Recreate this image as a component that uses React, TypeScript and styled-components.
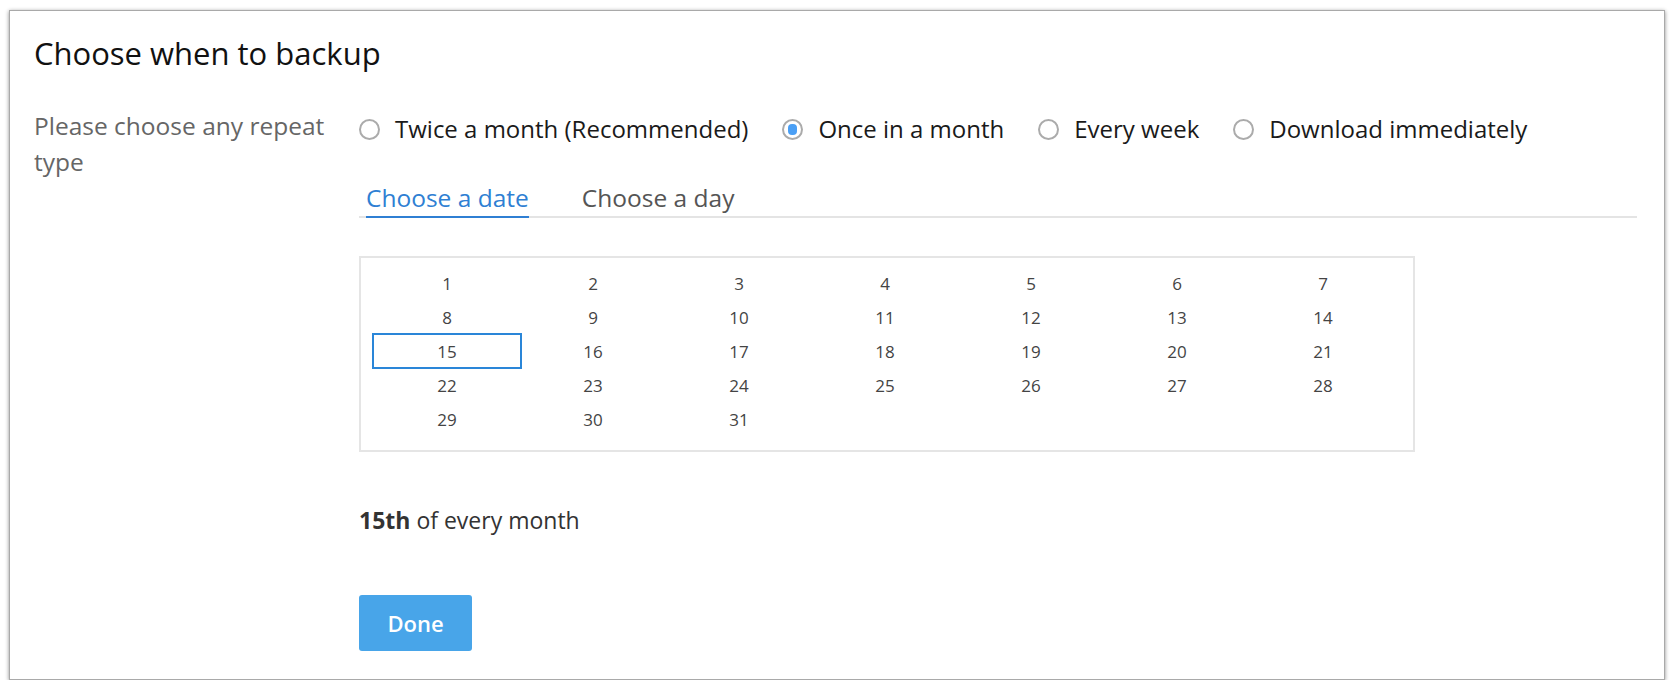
import React, { useState } from "react";
import styled, { createGlobalStyle } from "styled-components";

const GlobalStyle = createGlobalStyle`
  html, body {
    margin: 0;
    padding: 0;
    background: #ffffff;
  }
  body {
    font-family: "Open Sans", Lato, Arial, sans-serif;
  }
`;

const Card = styled.div`
  box-sizing: border-box;
  margin: 10px 0 0 9px;
  width: 1656px;
  height: 670px;
  background: #fff;
  border: 1px solid #a9a9a9;
  box-shadow: 0 1px 4px rgba(0, 0, 0, 0.45);
  padding: 22px 27px 0 24px;
`;

const Title = styled.h1`
  margin: 0;
  font-size: 31px;
  font-weight: 400;
  color: #111;
  line-height: 40px;
`;

const Body = styled.div`
  display: grid;
  grid-template-columns: 325px 1fr;
  margin-top: 46px;
`;

const Label = styled.div`
  font-size: 24.5px;
  line-height: 36px;
  color: #666;
  margin-top: -11px;
  padding-right: 16px;
`;

const Content = styled.div`
  display: flex;
  flex-direction: column;
`;

const RadioRow = styled.div`
  display: flex;
  align-items: center;
  gap: 34px;
  height: 20px;
`;

const RadioOption = styled.label`
  display: flex;
  align-items: center;
  gap: 15px;
  font-size: 24px;
  line-height: 30px;
  color: #1a1a1a;
  cursor: pointer;
`;

const Circle = styled.span<{ $on: boolean }>`
  box-sizing: border-box;
  width: 21px;
  height: 21px;
  border-radius: 50%;
  border: 2px solid #ababab;
  display: inline-flex;
  align-items: center;
  justify-content: center;
  background: #fff;
  &::after {
    content: "";
    display: ${(p) => (p.$on ? "block" : "none")};
    width: 9px;
    height: 11px;
    border-radius: 4px;
    background: #4a9ff5;
  }
`;

const TabBar = styled.div`
  display: flex;
  gap: 53px;
  margin-top: 44px;
  padding-left: 7px;
  border-bottom: 2px solid #e4e4e4;
`;

const Tab = styled.button<{ $active: boolean }>`
  background: none;
  border: none;
  padding: 0 0 3px;
  margin-bottom: -2px;
  font-family: inherit;
  font-size: 24.5px;
  line-height: 30px;
  color: ${(p) => (p.$active ? "#2f7fd3" : "#555")};
  border-bottom: 2px solid ${(p) => (p.$active ? "#2f7fd3" : "transparent")};
  cursor: pointer;
`;

const DateBox = styled.div`
  box-sizing: border-box;
  width: 1056px;
  margin-top: 38px;
  border: 2px solid #e5e5e5;
  padding: 8px 16px 14px 13px;
  display: grid;
  grid-template-columns: repeat(7, 146px);
  grid-auto-rows: 34px;
`;

const DateCell = styled.div<{ $selected: boolean }>`
  box-sizing: border-box;
  display: flex;
  align-items: center;
  justify-content: center;
  font-size: 17px;
  color: #444;
  cursor: pointer;
  border: 2px solid ${(p) => (p.$selected ? "#2a86d8" : "transparent")};
  margin: ${(p) => (p.$selected ? "-1px -2px" : "0")};
`;

const Summary = styled.div`
  margin-top: 54px;
  font-size: 23px;
  line-height: 29px;
  color: #333;
  b {
    font-weight: 700;
  }
`;

const DoneButton = styled.button`
  margin-top: 60px;
  width: 113px;
  height: 56px;
  border: none;
  border-radius: 3px;
  background: #48a5e9;
  color: #fff;
  font-family: inherit;
  font-size: 22px;
  font-weight: 600;
  cursor: pointer;
`;

const options = [
  "Twice a month (Recommended)",
  "Once in a month",
  "Every week",
  "Download immediately",
];

const ordinal = (n: number) => {
  if (n % 10 === 1 && n !== 11) return `${n}st`;
  if (n % 10 === 2 && n !== 12) return `${n}nd`;
  if (n % 10 === 3 && n !== 13) return `${n}rd`;
  return `${n}th`;
};

export default function App() {
  const [repeat, setRepeat] = useState(1);
  const [tab, setTab] = useState(0);
  const [day, setDay] = useState(15);

  return (
    <>
      <GlobalStyle />
      <Card>
        <Title>Choose when to backup</Title>
        <Body>
          <Label>Please choose any repeat type</Label>
          <Content>
            <RadioRow>
              {options.map((o, i) => (
                <RadioOption key={o} onClick={() => setRepeat(i)}>
                  <Circle $on={repeat === i} />
                  {o}
                </RadioOption>
              ))}
            </RadioRow>
            <TabBar>
              <Tab $active={tab === 0} onClick={() => setTab(0)}>
                Choose a date
              </Tab>
              <Tab $active={tab === 1} onClick={() => setTab(1)}>
                Choose a day
              </Tab>
            </TabBar>
            <DateBox>
              {Array.from({ length: 31 }, (_, i) => i + 1).map((d) => (
                <DateCell key={d} $selected={d === day} onClick={() => setDay(d)}>
                  {d}
                </DateCell>
              ))}
            </DateBox>
            <Summary>
              <b>{ordinal(day)}</b> of every month
            </Summary>
            <div>
              <DoneButton>Done</DoneButton>
            </div>
          </Content>
        </Body>
      </Card>
    </>
  );
}
